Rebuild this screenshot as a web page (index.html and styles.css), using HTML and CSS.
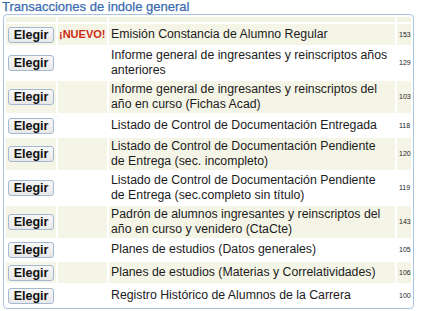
FILE: index.html
```html
<!DOCTYPE html>
<html lang="es">
<head>
<meta charset="utf-8">
<title>Transacciones</title>
<link rel="stylesheet" href="styles.css">
</head>
<body>
<div class="title">Transacciones de indole general</div>
<div class="box">
<table class="list">
<colgroup><col class="c-btn"><col class="c-new"><col class="c-desc"><col class="c-num"></colgroup>
<tr class="head"><td></td><td></td><td></td><td></td></tr>
<tr class="odd one"><td class="btn"><button>Elegir</button></td><td class="new">¡NUEVO!</td><td class="desc">Emisión Constancia de Alumno Regular</td><td class="num">153</td></tr>
<tr class="even"><td class="btn"><button>Elegir</button></td><td></td><td class="desc">Informe general de ingresantes y reinscriptos años<br>anteriores</td><td class="num">129</td></tr>
<tr class="odd"><td class="btn"><button>Elegir</button></td><td></td><td class="desc">Informe general de ingresantes y reinscriptos del<br>año en curso (Fichas Acad)</td><td class="num">103</td></tr>
<tr class="even one"><td class="btn"><button>Elegir</button></td><td></td><td class="desc">Listado de Control de Documentación Entregada</td><td class="num">118</td></tr>
<tr class="odd"><td class="btn"><button>Elegir</button></td><td></td><td class="desc">Listado de Control de Documentación Pendiente<br>de Entrega (sec. incompleto)</td><td class="num">120</td></tr>
<tr class="even"><td class="btn"><button>Elegir</button></td><td></td><td class="desc">Listado de Control de Documentación Pendiente<br>de Entrega (sec.completo sin título)</td><td class="num">119</td></tr>
<tr class="odd"><td class="btn"><button>Elegir</button></td><td></td><td class="desc">Padrón de alumnos ingresantes y reinscriptos del<br>año en curso y venidero (CtaCte)</td><td class="num">143</td></tr>
<tr class="even one"><td class="btn"><button>Elegir</button></td><td></td><td class="desc">Planes de estudios (Datos generales)</td><td class="num">105</td></tr>
<tr class="odd one"><td class="btn"><button>Elegir</button></td><td></td><td class="desc">Planes de estudios (Materias y Correlatividades)</td><td class="num">106</td></tr>
<tr class="even one"><td class="btn"><button>Elegir</button></td><td></td><td class="desc">Registro Histórico de Alumnos de la Carrera</td><td class="num">100</td></tr>
</table>
</div>
<div class="title next">Relativas a Especialidad</div>
</body>
</html>
```
FILE: styles.css
```css
html, body {
  margin: 0;
  padding: 0;
  background: #ffffff;
}
body {
  font-family: "Liberation Sans", Arial, sans-serif;
  color: #1c1c1c;
  overflow: hidden;
}
.title {
  color: #3a6cb2;
  font-size: 13px;
  line-height: 14px;
  padding-left: 2px;
  font-weight: normal;
  -webkit-text-stroke: 0.25px #3a6cb2;
}
.box {
  margin-left: 3px;
  width: 409px;
  border: 1px solid #a9c4e0;
  border-radius: 4px;
}
.next {
  margin-top: 1px;
}
.list {
  border-spacing: 2px;
  border-collapse: separate;
  table-layout: fixed;
  width: 100%;
}
.c-btn { width: 50px; }
.c-new { width: 49px; }
.c-num { width: 14px; }
.list td {
  padding: 1px 0;
  vertical-align: middle;
}
.head td {
  height: 5px;
  padding: 0;
  background: #f3f3e2;
}
.odd td {
  background: #f5f5e7;
}
.even td {
  background: #ffffff;
}
.one td {
  height: 18px;
}
.btn {
  text-align: center;
}
.btn button {
  display: inline-block;
  width: 46px;
  height: 16px;
  margin: 1px 0;
  padding: 0;
  font-family: "Liberation Sans", Arial, sans-serif;
  font-weight: bold;
  font-size: 12.5px;
  line-height: 14px;
  color: #111111;
  background: linear-gradient(#f7f7f7, #e8e8e8);
  border: 1px solid #a3b9d1;
  border-radius: 3px;
  vertical-align: middle;
}
.new {
  color: #cc2a10;
  font-weight: bold;
  font-size: 11px;
  padding-left: 1px !important;
  white-space: nowrap;
}
.desc {
  font-size: 12.3px;
  line-height: 15px;
  padding-left: 2px !important;
  white-space: nowrap;
}
.num {
  font-size: 7px;
  padding-left: 2px !important;
  color: #1c1c1c;
}
```
